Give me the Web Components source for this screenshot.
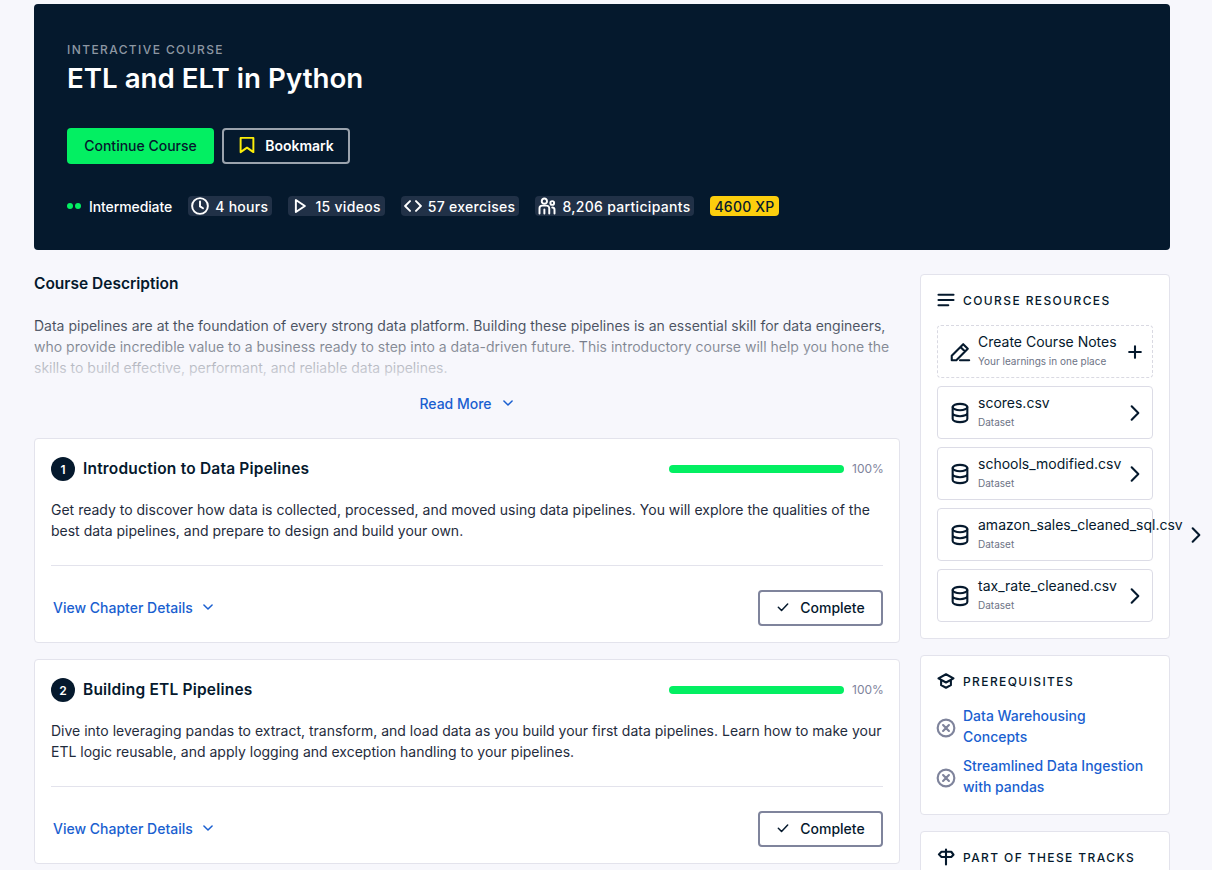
<!DOCTYPE html>
<html>
<head>
<meta charset="utf-8">
<title>ETL and ELT in Python</title>
<style>
  html, body { margin: 0; height: 870px; overflow: hidden; background: #f7f7fc; }
  body { font-family: "Inter", "Liberation Sans", sans-serif; color: #05192d; }
  course-page { --blue: #1a5fd0; --navy: #05192d; --line: #e3e3ec; }
</style>
</head>
<body>
<course-page>
  <course-hero slot="hero" label="Interactive Course" name="ETL and ELT in Python">
    <meta-chip icon="clock">4 hours</meta-chip>
    <meta-chip icon="play">15 videos</meta-chip>
    <meta-chip icon="code">57 exercises</meta-chip>
    <meta-chip icon="people">8,206 participants</meta-chip>
  </course-hero>

  <course-description slot="main">Data pipelines are at the foundation of every strong data platform. Building these pipelines is an essential skill for data engineers, who provide incredible value to a business ready to step into a data-driven future. This introductory course will help you hone the skills to build effective, performant, and reliable data pipelines.</course-description>
  <chapter-card slot="main" number="1" name="Introduction to Data Pipelines">Get ready to discover how data is collected, processed, and moved using data pipelines. You will explore the qualities of the best data pipelines, and prepare to design and build your own.</chapter-card>
  <chapter-card slot="main" number="2" name="Building ETL Pipelines">Dive into leveraging pandas to extract, transform, and load data as you build your first data pipelines. Learn how to make your ETL logic reusable, and apply logging and exception handling to your pipelines.</chapter-card>

  <side-card slot="side" icon="lines" name="Course Resources">
    <resource-row icon="pencil" action="plus" dashed name="Create Course Notes" sub="Your learnings in one place"></resource-row>
    <resource-row icon="db" action="chevron" name="scores.csv" sub="Dataset"></resource-row>
    <resource-row icon="db" action="chevron" name="schools_modified.csv" sub="Dataset"></resource-row>
    <resource-row icon="db" action="chevron" name="amazon_sales_cleaned_sql.csv" sub="Dataset"></resource-row>
    <resource-row icon="db" action="chevron" name="tax_rate_cleaned.csv" sub="Dataset"></resource-row>
  </side-card>
  <side-card slot="side" icon="cap" name="Prerequisites">
    <prereq-link>Data Warehousing Concepts</prereq-link>
    <prereq-link>Streamlined Data Ingestion with pandas</prereq-link>
  </side-card>
  <side-card slot="side" icon="sign" name="Part of these tracks"></side-card>
</course-page>

<script>
const ICONS = {
  clock: '<circle cx="12" cy="12" r="10.500"/><path d="M12 6v6.500l4 2.500"/>',
  play: '<path d="M6.500 4v16L18.500 12z"/>',
  code: '<path d="M8 5.500L1.500 12 8 18.500M16 5.500l6.500 6.500-6.500 6.500"/>',
  people: '<circle cx="8.500" cy="5.500" r="3.500"/><path d="M2 22v-7a3.500 3.500 0 0 1 3.500-3.500h6a3.500 3.500 0 0 1 3.500 3.500v7M8.500 16.500V22"/><circle cx="19" cy="8" r="2.500"/><path d="M19 14a3 3 0 0 1 3 3v5"/>',
  bookmark: '<path d="M3.500 2.500h17v19L12 15.500 3.500 21.500z"/>',
  lines: '<path d="M2 5h20M2 12h20M2 19h13"/>',
  pencil: '<path d="M3 21v-5L15.500 3.500l5 5L8 21zM12.500 6.500l5 5M12 21h10"/>',
  plus: '<path d="M12 5v14M5 12h14"/>',
  chevron: '<path d="M8 4l8 8-8 8"/>',
  down: '<path d="M5 8.500l7 7 7-7"/>',
  check: '<path d="M4 12.500l5.500 5.500L20 7"/>',
  db: '<ellipse cx="12" cy="5.500" rx="8" ry="3.500"/><path d="M4 5.500v13c0 2 3.600 3.500 8 3.500s8-1.500 8-3.500v-13M4 12c0 2 3.600 3.500 8 3.500s8-1.500 8-3.500"/>',
  cap: '<path d="M12 3L2 8.500 12 14l10-5.500zM5.500 11v6.500L12 21l6.500-3.500V11"/>',
  cross: '<circle cx="12" cy="12" r="10"/><path d="M8.500 8.500l7 7M15.500 8.500l-7 7"/>',
  sign: '<path d="M12 2v20M12 5H6L2.500 8.500 6 12h13l3-3-3-4z"/>'
}

function icon(name, size, stroke) {
  return `<svg width="${size}" height="${size}" viewBox="0 0 24 24" fill="none" stroke="currentColor" stroke-width="${stroke || 2.4}" stroke-linecap="round" stroke-linejoin="round" aria-hidden="true">${ICONS[name]}</svg>`
}

const pageTemplate = document.createElement('template')
pageTemplate.innerHTML = /* html */ `
<style>
  :host { display: block; width: 1136px; margin: 4px 0 0 34px; }
  .columns { display: flex; gap: 20px; margin-top: 24px; align-items: flex-start; }
  .main { width: 866px; display: flex; flex-direction: column; gap: 16px; }
  .side { width: 250px; display: flex; flex-direction: column; gap: 16px; }
</style>
<slot name="hero"></slot>
<div class="columns">
  <div class="main"><slot name="main"></slot></div>
  <div class="side"><slot name="side"></slot></div>
</div>
`
class CoursePage extends HTMLElement {
  constructor() {
    super()
    this.attachShadow({ mode: 'open' })
  }
  connectedCallback() {
    this.shadowRoot.appendChild(pageTemplate.content.cloneNode(true))
  }
}

class CourseHero extends HTMLElement {
  constructor() {
    super()
    this.attachShadow({ mode: 'open' })
  }
  connectedCallback() {
    this.shadowRoot.innerHTML = /* html */ `
    <style>
      :host { display: block; box-sizing: border-box; height: 246px; padding: 37px 33px 0; background: #05192d; border-radius: 4px; color: #fff; }
      .label { font-size: 12px; line-height: 18px; letter-spacing: 1.4px; text-transform: uppercase; color: #8d97a3; font-weight: 500; }
      h1 { margin: 0; font-size: 27.700px; line-height: 38px; font-weight: 600; }
      .actions { display: flex; gap: 8px; margin-top: 31px; }
      .btn { box-sizing: border-box; height: 36px; padding-bottom: 2px; display: flex; align-items: center; justify-content: center; border-radius: 4px; font-size: 14px; font-weight: 500; }
      .go { width: 147px; background: #03ef62; color: #05192d; }
      .mark { width: 128px; border: 2px solid #9ba3ad; gap: 9px; color: #fff; font-weight: 600; }
      .mark svg { color: #fcee09; }
      .meta { display: flex; align-items: center; gap: 16px; margin-top: 32px; height: 20px; font-size: 14px; font-weight: 500; }
      .level { display: flex; align-items: center; letter-spacing: -.1px; }
      .dot { width: 6px; height: 6px; border-radius: 50%; background: #03ef62; margin-right: 2px; }
      .level span:last-child { margin-left: 6px; }
      .xp { height: 20px; padding: 0 4px; display: flex; align-items: center; background: #fcce0d; color: #05192d; border-radius: 4px; letter-spacing: .2px; }
    </style>
    <div class="label">${this.getAttribute('label')}</div>
    <h1>${this.getAttribute('name')}</h1>
    <div class="actions">
      <div class="btn go">Continue Course</div>
      <div class="btn mark">${icon('bookmark', 18, 2.6)}<span>Bookmark</span></div>
    </div>
    <div class="meta">
      <div class="level"><span class="dot"></span><span class="dot"></span><span>Intermediate</span></div>
      <slot></slot>
      <div class="xp">4600 XP</div>
    </div>`
  }
}

class MetaChip extends HTMLElement {
  constructor() {
    super()
    this.attachShadow({ mode: 'open' })
  }
  connectedCallback() {
    this.shadowRoot.innerHTML = /* html */ `
    <style>
      :host { display: flex; align-items: center; gap: 6px; height: 20px; padding: 0 4px 0 3px; background: #213147; border-radius: 4px; color: #fff; letter-spacing: .3px; }
    </style>
    ${icon(this.getAttribute('icon'), 18, 2.6)}<span><slot></slot></span>`
  }
}

class CourseDescription extends HTMLElement {
  constructor() {
    super()
    this.attachShadow({ mode: 'open' })
  }
  connectedCallback() {
    this.shadowRoot.innerHTML = /* html */ `
    <style>
      :host { display: block; margin-bottom: 8px; }
      h2 { margin: 0; font-size: 15.500px; line-height: 20px; font-weight: 600; }
      .text { position: relative; margin-top: 21px; height: 63px; overflow: hidden; font-size: 14px; line-height: 21px; color: #30394a; }
      .fade { position: absolute; inset: 0; background: linear-gradient(to bottom, rgba(247,247,252,0) 0, rgba(247,247,252,.85) 100%); }
      .more { display: flex; align-items: center; justify-content: center; gap: 9px; margin-top: 14px; height: 22px; font-size: 14px; font-weight: 500; color: var(--blue); }
    </style>
    <h2>Course Description</h2>
    <div class="text"><slot></slot><div class="fade"></div></div>
    <div class="more">Read More ${icon('down', 14, 2.6)}</div>`
  }
}

class ChapterCard extends HTMLElement {
  constructor() {
    super()
    this.attachShadow({ mode: 'open' })
  }
  connectedCallback() {
    this.shadowRoot.innerHTML = /* html */ `
    <style>
      :host { display: block; box-sizing: border-box; height: 205px; padding: 18px 16px 0; background: #fff; border: 1px solid var(--line); border-radius: 4px; }
      .head { display: flex; align-items: center; height: 24px; }
      .num { width: 24px; height: 24px; border-radius: 50%; background: #05192d; color: #fff; font-size: 12px; font-weight: 600; display: flex; align-items: center; justify-content: center; margin-right: 8px; }
      h3 { flex: 1; margin: 0 0 1px; font-size: 15.500px; letter-spacing: .2px; font-weight: 600; }
      .bar { width: 175px; height: 8px; border-radius: 4px; background: #03ef62; }
      .pct { width: 31px; margin: 0 0 1px 8px; font-size: 12px; color: #7f849c; text-align: right; }
      p { margin: 18px 0 0; height: 42px; font-size: 14px; line-height: 21px; color: #1f2c3d; }
      hr { border: 0; border-top: 1px solid var(--line); margin: 24px 0 0; }
      .foot { display: flex; align-items: center; justify-content: space-between; margin-top: 24px; height: 36px; }
      .details { display: flex; align-items: center; gap: 8px; margin-left: 2px; padding-bottom: 2px; font-size: 14px; font-weight: 500; color: var(--blue); }
      .done { box-sizing: border-box; width: 125px; height: 36px; padding-bottom: 2px; display: flex; align-items: center; justify-content: center; gap: 10px; border: 2px solid #7f849c; border-radius: 4px; font-size: 14px; font-weight: 500; color: #05192d; }
    </style>
    <div class="head">
      <div class="num">${this.getAttribute('number')}</div>
      <h3>${this.getAttribute('name')}</h3>
      <div class="bar"></div>
      <div class="pct">100%</div>
    </div>
    <p><slot></slot></p>
    <hr>
    <div class="foot">
      <div class="details">View Chapter Details ${icon('down', 14, 2.6)}</div>
      <div class="done">${icon('check', 14, 2.6)}<span>Complete</span></div>
    </div>`
  }
}

class SideCard extends HTMLElement {
  constructor() {
    super()
    this.attachShadow({ mode: 'open' })
  }
  connectedCallback() {
    this.shadowRoot.innerHTML = /* html */ `
    <style>
      :host { display: block; box-sizing: border-box; padding: 16px; background: #fff; border: 1px solid var(--line); border-radius: 4px; }
      .head { display: flex; align-items: center; gap: 8px; height: 18px; margin-bottom: 16px; font-size: 12px; font-weight: 500; letter-spacing: 1.400px; text-transform: uppercase; white-space: nowrap; }
      .body { display: flex; flex-direction: column; gap: 8px; }
    </style>
    <div class="head">${icon(this.getAttribute('icon'), 18, 2.8)}<span>${this.getAttribute('name')}</span></div>
    <div class="body"><slot></slot></div>`
  }
}

class ResourceRow extends HTMLElement {
  constructor() {
    super()
    this.attachShadow({ mode: 'open' })
  }
  connectedCallback() {
    const border = this.hasAttribute('dashed') ? '1px dashed #d9d9e2' : '1px solid #dcdce6'
    this.shadowRoot.innerHTML = /* html */ `
    <style>
      :host { display: flex; align-items: center; justify-content: space-between; box-sizing: border-box; width: 216px; height: 53px; padding: 0 7px 0 11px; border: ${border}; border-radius: 4px; }
      .lead { display: flex; align-items: center; gap: 7px; white-space: nowrap; }
      .name { font-size: 14px; line-height: 20px; color: #05192d; }
      .sub { font-size: 10px; line-height: 16px; margin: 1px 0 2px; color: #6d7385; }
      .action { flex: none; margin-left: 3px; display: flex; }
    </style>
    <div class="lead">
      ${icon(this.getAttribute('icon'), 22, 2.300)}
      <div>
        <div class="name">${this.getAttribute('name')}</div>
        <div class="sub">${this.getAttribute('sub')}</div>
      </div>
    </div>
    <div class="action">${icon(this.getAttribute('action'), 20, 2.500)}</div>`
  }
}

class PrereqLink extends HTMLElement {
  constructor() {
    super()
    this.attachShadow({ mode: 'open' })
  }
  connectedCallback() {
    this.shadowRoot.innerHTML = /* html */ `
    <style>
      :host { display: flex; align-items: center; gap: 7px; font-size: 14px; line-height: 21px; font-weight: 500; color: var(--blue); }
      svg { flex: none; margin: 2px 0 0 -1px; color: #7f849c; }
      .text { margin: -1px 0 1px; }
    </style>
    ${icon('cross', 20, 2.600)}<div class="text"><slot></slot></div>`
  }
}

customElements.define('course-page', CoursePage)
customElements.define('course-hero', CourseHero)
customElements.define('meta-chip', MetaChip)
customElements.define('course-description', CourseDescription)
customElements.define('chapter-card', ChapterCard)
customElements.define('side-card', SideCard)
customElements.define('resource-row', ResourceRow)
customElements.define('prereq-link', PrereqLink)
</script>
</body>
</html>
